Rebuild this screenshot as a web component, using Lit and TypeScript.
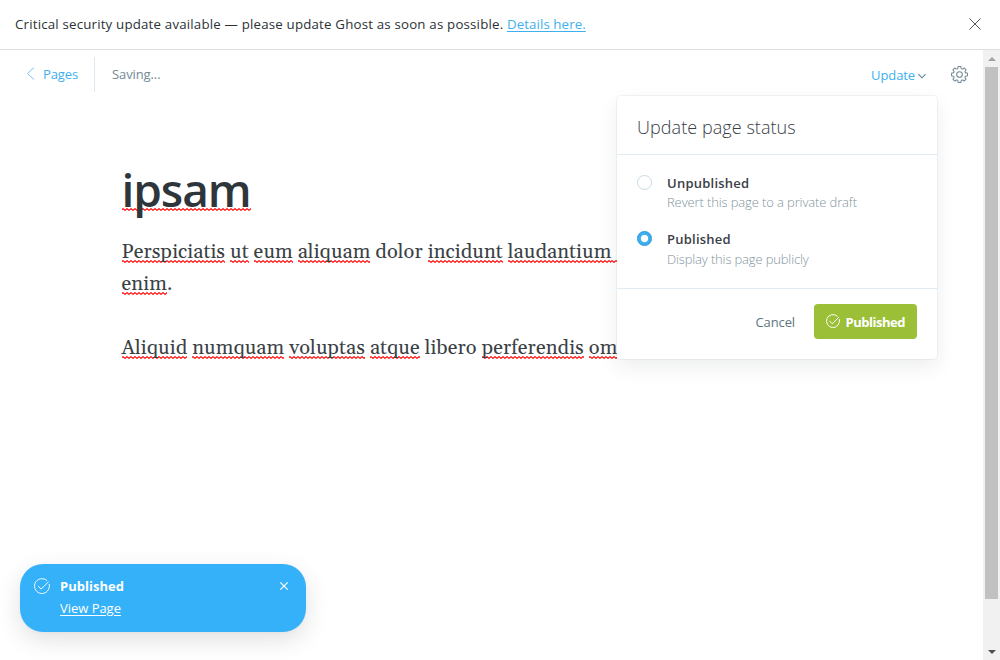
import { LitElement, html, css, svg } from "lit";
import { customElement, property } from "lit/decorators.js";

const checkCircle = html`<svg class="check" viewBox="0 0 24 24" fill="none" stroke="currentColor" stroke-width="1.5" stroke-linecap="round" stroke-linejoin="round">
  <path d="M6.3 12.2l4.4 4.5L21.6 5.8" /><path d="M22.9 9.6A11.2 11.2 0 1 1 19.2 3.5" />
</svg>`;

const cross = html`<svg class="cross" viewBox="0 0 12 12" fill="none" stroke="currentColor"><path d="M.5 .5l11 11M11.5 .5l-11 11" /></svg>`;

/** Outline of an eight-toothed gear centred in a 24-unit box. */
function gearPath(): string {
  const pts: string[] = [];
  for (let i = 0; i < 8; i++) {
    const base = (i * 45 - 90) * (Math.PI / 180);
    const at = (r: number, deg: number) => {
      const a = base + (deg * Math.PI) / 180;
      return `${(12 + r * Math.cos(a)).toFixed(2)} ${(12 + r * Math.sin(a)).toFixed(2)}`;
    };
    pts.push(`${i ? "L" : "M"}${at(11.3, -10)}Q${at(11.7, 0)} ${at(11.3, 10)}L${at(9.6, 13)}Q${at(7.6, 22.5)} ${at(9.6, 32)}`);
  }
  return pts.join("") + "Z";
}

/** Body copy; words wrapped in *asterisks* carry the spell-check squiggle. */
function spelled(text: string) {
  return text.split(/(\*[^*]+\*)/).map((part) =>
    part.startsWith("*") ? html`<span class="misspelt">${part.slice(1, -1)}</span>` : part
  );
}

@customElement("update-popover")
export class UpdatePopover extends LitElement {
  @property() status = "published";

  static styles = css`
    :host { display: block; box-sizing: border-box; background: #fff; border-radius: 4px; color: #394047;
      box-shadow: 0 0 0 1px rgba(99,114,130,.08), 0 8px 20px rgba(27,39,51,.08); }
    header { height: 58px; box-sizing: border-box; padding: 17px 20px 0; font-size: 18px; line-height: 28px; font-weight: 340; letter-spacing: .06px; }
    .options { border: solid #dfecf5; border-width: 1px 0; height: 135px; box-sizing: border-box; padding: 19px 20px 0; display: flex; flex-direction: column; gap: 18px; }
    .option { display: grid; grid-template-columns: 15px 1fr; column-gap: 15px; font-size: 13px; }
    .radio { box-sizing: border-box; width: 15px; height: 15px; margin-top: 1px; border: 1px solid #c5dbe8; border-radius: 50%; background: #fff; }
    .on .radio { border: 1px solid #1f93dd; background: radial-gradient(circle, #fff 3.3px, #3eb0ef 4.1px); }
    .name { font-weight: 600; line-height: 19px; letter-spacing: .24px; }
    .hint { grid-column: 2; font-weight: 320; line-height: 19px; letter-spacing: -.12px; color: #7f949d; }
    .on .hint { padding-top: 1px; letter-spacing: -.15px; }
    footer { height: 70px; box-sizing: border-box; padding: 15px 20px 0; display: flex; justify-content: flex-end; gap: 19px; font-size: 13px; line-height: 35px; }
    .cancel { color: #5c7480; letter-spacing: -.11px; padding-top: 1px; }
    .save { box-sizing: border-box; width: 103px; height: 35px; border-radius: 4px; background: #9bbf37; color: #fff; font-weight: 700; letter-spacing: -.48px;
      display: flex; align-items: center; padding: 1px 0 0 12px; gap: 5.5px; }
    .check { width: 14px; height: 14px; margin-top: -2px; stroke-width: 1.7; flex: none; }
  `;

  private option(value: string, name: string, hint: string) {
    return html`<div class="option ${this.status === value ? "on" : ""}">
      <span class="radio"></span><span class="name">${name}</span><span class="hint">${hint}</span>
    </div>`;
  }

  render() {
    return html`
      <header>Update page status</header>
      <div class="options">
        ${this.option("unpublished", "Unpublished", "Revert this page to a private draft")}
        ${this.option("published", "Published", "Display this page publicly")}
      </div>
      <footer><span class="cancel">Cancel</span><span class="save">${checkCircle}<span>Published</span></span></footer>
    `;
  }
}

@customElement("toast-notice")
export class ToastNotice extends LitElement {
  static styles = css`
    :host { box-sizing: border-box; display: grid; grid-template-columns: 16px 1fr 10px; column-gap: 10px; align-content: start;
      width: 286px; height: 68px; padding: 11px 17px 0 14px; border-radius: 23px; background: #35b1f9; color: #fff; font-size: 13px; line-height: 22px;
      box-shadow: 0 8px 24px rgba(0,0,0,.12), 0 1px 3px rgba(0,0,0,.03); }
    .title { font-weight: 700; letter-spacing: .02px; }
    .link { grid-column: 2; text-decoration: underline; text-underline-offset: 2px; letter-spacing: -.03px; }
    .check { width: 16px; height: 16px; margin-top: 3px; stroke-width: 1.4; }
    .cross { width: 8px; height: 8px; margin: 7px 0 0 .5px; stroke-width: 1.9; overflow: visible; }
  `;
  render() {
    return html`${checkCircle}<span class="title">Published</span>${cross}<span class="link">View Page</span>`;
  }
}

@customElement("app-root")
export class AppRoot extends LitElement {
  static styles = css`
    :host { display: flex; flex-direction: column; position: relative; height: 660px; overflow: hidden; background: #fff;
      font-family: "Open Sans", "Noto Sans", sans-serif; color: #15171a; }
    .banner { flex: none; height: 50px; box-sizing: border-box; border-bottom: 1px solid #dcdedf; padding: 0 19px 1px 15px; display: flex; align-items: center;
      justify-content: space-between; font-size: 13.3px; letter-spacing: .182px; color: #2b3236; }
    .banner a { color: #3eb0ef; text-decoration: underline; text-underline-offset: 2px; letter-spacing: .08px; }
    .banner .cross { width: 12px; height: 12px; color: #4b5a62; overflow: visible; }
    .body { flex: 1; min-height: 0; display: flex; }
    main { flex: 1; min-width: 0; overflow: hidden; }
    .toolbar { display: flex; align-items: center; height: 48px; padding: 0 15px 0 26px; font-size: 13px; letter-spacing: -.11px; color: #738a94; }
    .back { display: flex; align-items: center; gap: 8px; height: 35px; box-sizing: border-box; padding: 0 16px 1px 0; border-right: 1px solid #dfe9f1; color: #3eb0ef; margin-top: 0; }
    .back svg { width: 9px; height: 13px; color: #7cc7ef; }
    .saving { margin-left: 17px; }
    .update { margin-left: auto; display: flex; align-items: center; gap: 3px; color: #3eb0ef; padding-top: 1px; }
    .update svg { width: 8px; height: 6px; color: #5b8296; margin-top: 2px; }
    .gear { width: 17px; height: 17px; margin-left: 25px; color: #738a94; }
    article { padding: 0 121px 0 121.5px; width: 740px; box-sizing: content-box; }
    h1 { margin: 59px 0 0; font-size: 46px; line-height: 64px; font-weight: 600; letter-spacing: -1.05px; color: #2e363b; }
    p { margin: 0 0 32px; font: 20px/32px Gelasio, Georgia, "Liberation Serif", serif; letter-spacing: .1px; color: #3a4145; }
    h1 + p { margin-top: 15px; }
    .misspelt { background: url("data:image/svg+xml,%3Csvg xmlns='http://www.w3.org/2000/svg' width='4' height='3'%3E%3Cpath d='M-1 2.4L1 .6L3 2.4L5 .6' fill='none' stroke='red' stroke-width='1.05'/%3E%3C/svg%3E") repeat-x left bottom 2px; }
    h1 .misspelt { background-position-y: 50px; }
    .cut { padding-right: 8px; }
    .scrollbar { flex: none; width: 17px; box-sizing: border-box; background: #f1f1f1; display: flex; flex-direction: column; align-items: center; padding: 7px 0 6px; }
    .scrollbar svg { width: 8px; height: 4px; flex: none; }
    .thumb { width: 13px; height: 532px; background: #c1c1c1; margin: 6px 0 auto; }
    update-popover { position: absolute; left: 617px; top: 96px; width: 320px; height: 263px; }
    toast-notice { position: absolute; left: 20px; top: 564px; }
  `;

  render() {
    return html`
      <div class="banner">
        <span>Critical security update available — please update Ghost as soon as possible. <a>Details here.</a></span>
        ${cross}
      </div>
      <div class="body">
        <main>
          <nav class="toolbar">
            <span class="back"><svg viewBox="0 0 9 13" fill="none" stroke="currentColor"><path d="M8 .5L1.5 6.5L8 12.5" /></svg>Pages</span>
            <span class="saving">Saving...</span>
            <span class="update">Update<svg viewBox="0 0 9 6" fill="none" stroke="currentColor" stroke-width="1.2"><path d="M.5 .8L4.5 5L8.5 .8" /></svg></span>
            <svg class="gear" viewBox="0 0 24 24" fill="none" stroke="currentColor" stroke-width="1.5" stroke-linejoin="round">${svg`<path d=${gearPath()} />`}<circle cx="12" cy="12" r="4" /></svg>
          </nav>
          <article>
            <h1>${spelled("*ipsam*")}</h1>
            <p>${spelled("*Perspiciatis* *ut* *eum* *aliquam* dolor *incidunt* *laudantium* ")}<span class="misspelt cut"></span><br />${spelled("*enim*.")}</p>
            <p>${spelled("*Aliquid* *numquam* *voluptas* *atque* libero *perferendis* *om*")}</p>
          </article>
        </main>
        <div class="scrollbar">
          <svg viewBox="0 0 8 4"><path d="M0 4L4 0L8 4Z" fill="#a3a3a3" /></svg>
          <div class="thumb"></div>
          <svg viewBox="0 0 8 4"><path d="M0 0L4 4L8 0Z" fill="#505050" /></svg>
        </div>
      </div>
      <update-popover></update-popover>
      <toast-notice></toast-notice>
    `;
  }
}
